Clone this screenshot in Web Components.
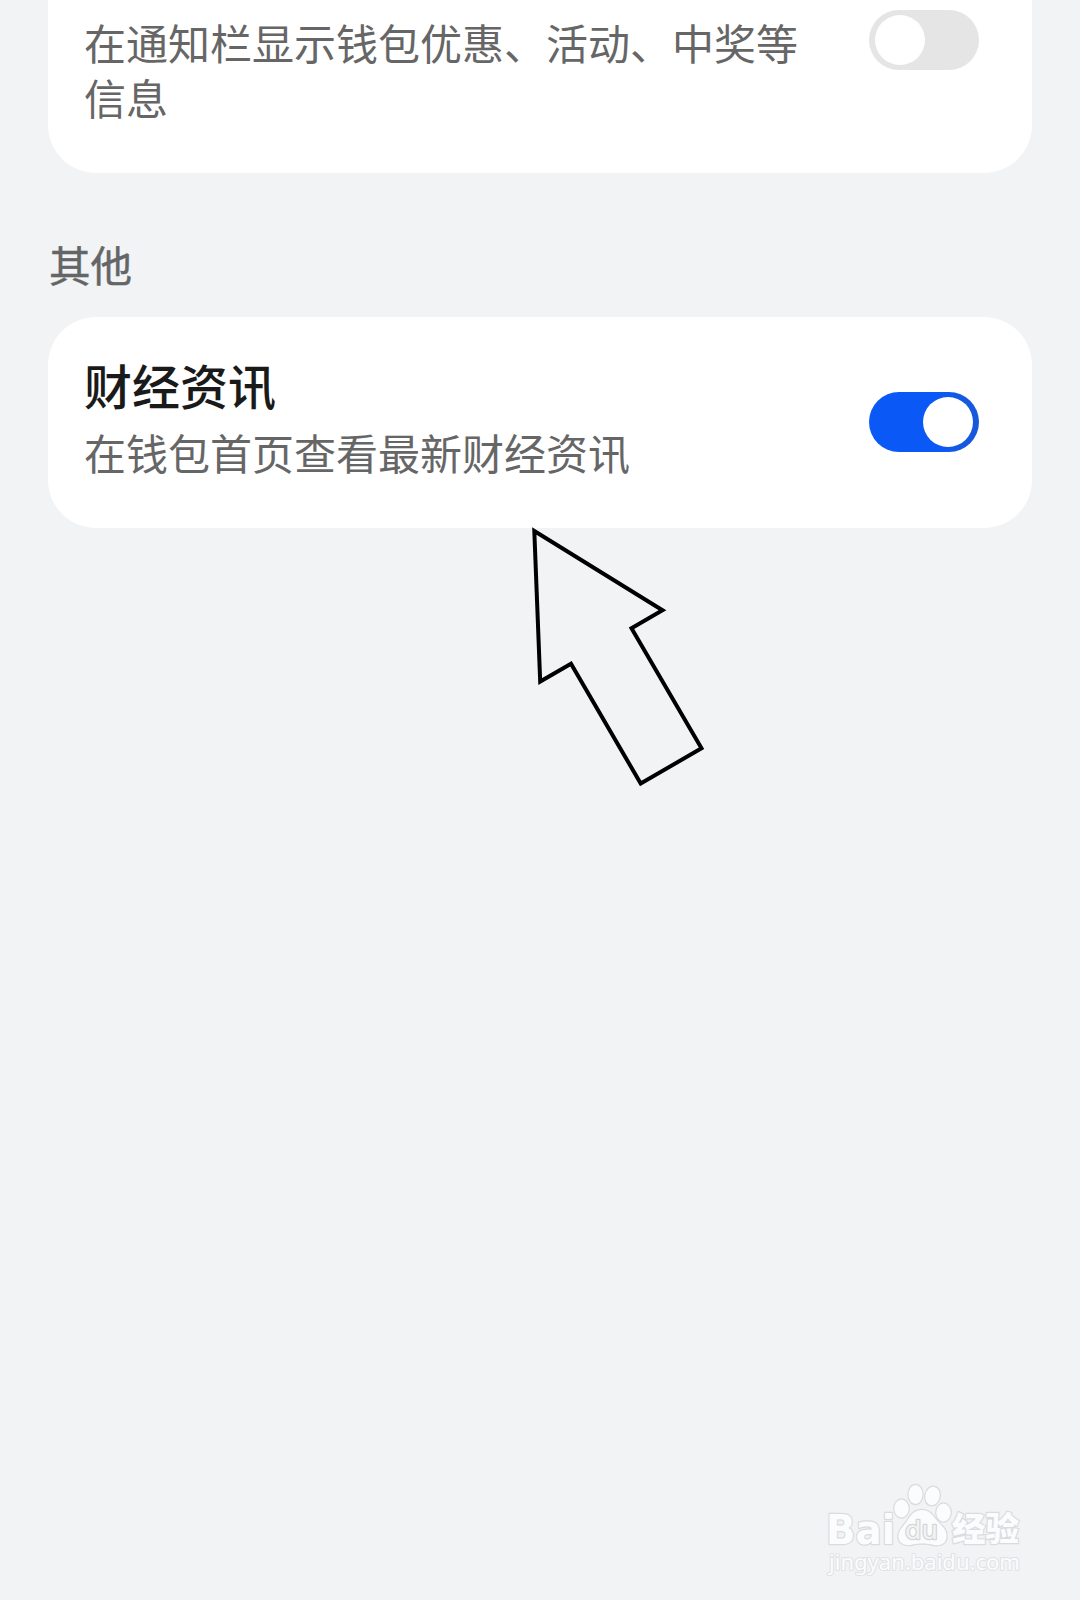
<!DOCTYPE html>
<html lang="zh-CN">
<head>
  <meta charset="UTF-8">
  <title>钱包设置</title>
  <style>
    body {
      margin: 0;
      background: #f1f3f5;
      font-family: "Noto Sans CJK SC", sans-serif;
    }
  </style>
</head>
<body>
  <settings-page>
    <setting-card class="first">
      <setting-row>在通知栏显示钱包优惠、活动、中奖等信息</setting-row>
    </setting-card>
    <section-title>其他</section-title>
    <setting-card>
      <setting-row checked>
        <span slot="title">财经资讯</span>
        在钱包首页查看最新财经资讯
      </setting-row>
    </setting-card>
    <pointer-arrow slot="overlay"></pointer-arrow>
    <site-watermark slot="overlay"></site-watermark>
  </settings-page>

  <script>
    class SettingsPage extends HTMLElement {
      constructor() {
        super();
        this.attachShadow({ mode: "open" }).innerHTML = `
          <style>
            :host {
              display: block;
              position: relative;
              height: 1600px;
              overflow: hidden;
            }
            main {
              display: flex;
              flex-direction: column;
              padding: 0 48px;
            }
            ::slotted(.first) {
              --card-height: 173px;
              --card-radius: 0 0 48px 48px;
              --card-align: flex-start;
              --card-bottom: 0;
            }
          </style>
          <main><slot></slot></main>
          <slot name="overlay"></slot>`;
      }
    }

    class SettingCard extends HTMLElement {
      constructor() {
        super();
        this.attachShadow({ mode: "open" }).innerHTML = `
          <style>
            :host {
              display: flex;
              align-items: var(--card-align, center);
              box-sizing: border-box;
              height: var(--card-height, 211px);
              padding: 0 53px var(--card-bottom, 1px) 36px;
              background: #fff;
              border-radius: var(--card-radius, 48px);
            }
          </style>
          <slot></slot>`;
      }
    }

    class SectionTitle extends HTMLElement {
      constructor() {
        super();
        this.attachShadow({ mode: "open" }).innerHTML = `
          <style>
            :host {
              display: block;
              box-sizing: border-box;
              height: 144px;
              padding: 64px 0 0 1px;
              font-size: 41.5px;
              line-height: 55px;
              color: #646566;
              -webkit-text-stroke: 0.5px #646566;
            }
          </style>
          <slot></slot>`;
      }
    }

    class SettingRow extends HTMLElement {
      constructor() {
        super();
        this.attachShadow({ mode: "open" });
      }

      connectedCallback() {
        const checked = this.hasAttribute("checked");
        this.shadowRoot.innerHTML = `
          <style>
            :host {
              display: flex;
              flex: 1;
              align-items: ${checked ? "center" : "flex-start"};
              justify-content: space-between;
            }
            .text {
              width: 735px;
              padding: ${checked ? "0 0 16px" : "14px 0 0"};
              font-size: 42px;
              line-height: 55px;
              color: #666;
            }
            ::slotted([slot="title"]) {
              display: block;
              margin-bottom: 5px;
              font-size: 48px;
              font-weight: 500;
              line-height: 70px;
              color: #1a1a1a;
            }
            toggle-switch {
              margin-top: ${checked ? "0" : "10px"};
            }
          </style>
          <div class="text"><slot name="title"></slot><slot></slot></div>
          <toggle-switch ${checked ? "checked" : ""}></toggle-switch>`;
      }
    }

    class ToggleSwitch extends HTMLElement {
      constructor() {
        super();
        this.attachShadow({ mode: "open" }).innerHTML = `
          <style>
            :host {
              display: flex;
              box-sizing: border-box;
              width: 110px;
              height: 60px;
              padding: 5px 6px;
              border-radius: 30px;
              background: #e5e5e5;
            }
            :host([checked]) {
              justify-content: flex-end;
              background: linear-gradient(90deg, #0a59f7 60%, #1759dc 90%);
            }
            .knob {
              width: 50px;
              height: 50px;
              border-radius: 50%;
              background: #fff;
            }
          </style>
          <div class="knob"></div>`;
      }
    }

    class PointerArrow extends HTMLElement {
      constructor() {
        super();
        this.attachShadow({ mode: "open" }).innerHTML = `
          <style>
            :host {
              display: block;
              position: absolute;
              left: 520px;
              top: 515px;
            }
            svg { display: block; }
          </style>
          <svg width="200" height="280" viewBox="520 515 200 280">
            <path d="M534.3 531 L662.5 610.3 L631.5 628.3 L701.5 748.3 L640.7 783.5 L571 663.8 L540.2 681.5 Z"
              fill="none" stroke="#000" stroke-width="4"/>
          </svg>`;
      }
    }

    class SiteWatermark extends HTMLElement {
      constructor() {
        super();
        this.attachShadow({ mode: "open" }).innerHTML = `
          <style>
            :host {
              display: block;
              position: absolute;
              left: 820px;
              top: 1475px;
            }
            svg { display: block; }
            text, .paw {
              fill: #fbfcfd;
              stroke: #d9dbdd;
              stroke-width: 2.4;
              paint-order: stroke;
              stroke-linejoin: round;
            }
            .latin { font-family: "DejaVu Sans", sans-serif; }
            .url {
              font-family: "Noto Sans", sans-serif;
              stroke: #e0e2e4;
              stroke-width: 2;
            }
          </style>
          <svg width="210" height="110" viewBox="820 1475 210 110">
            <text class="latin" x="826" y="1544" font-size="41" font-weight="700" textLength="69" lengthAdjust="spacingAndGlyphs">Bai</text>
            <g class="paw">
              <ellipse cx="901.5" cy="1508.5" rx="7.2" ry="9"/>
              <ellipse cx="915.5" cy="1494.5" rx="7" ry="9.5"/>
              <ellipse cx="932.5" cy="1496" rx="7.2" ry="9.3" transform="rotate(12 932.5 1496)"/>
              <ellipse cx="943.5" cy="1512.5" rx="7.2" ry="9"/>
              <path d="M922 1510 C930 1510 933 1516 938 1522 C943 1527 947 1530 946.500 1537 C946 1544 940 1546 934 1545 C927 1543 917 1543 911 1545 C903 1546 898 1542 898.500 1536 C899 1529 904 1526 907 1521 C911 1515 914 1510 922 1510 Z"/>
            </g>
            <text class="latin" x="905" y="1539" font-size="25" textLength="33" lengthAdjust="spacingAndGlyphs" style="fill:#f1f3f5;stroke:#d3d5d7">du</text>
            <text x="952" y="1541" font-size="33" font-weight="900" textLength="67" lengthAdjust="spacingAndGlyphs">经验</text>
            <text class="url" x="829" y="1570" font-size="21.5" textLength="191" lengthAdjust="spacingAndGlyphs">jingyan.baidu.com</text>
          </svg>`;
      }
    }

    customElements.define("toggle-switch", ToggleSwitch);
    customElements.define("setting-row", SettingRow);
    customElements.define("setting-card", SettingCard);
    customElements.define("section-title", SectionTitle);
    customElements.define("pointer-arrow", PointerArrow);
    customElements.define("site-watermark", SiteWatermark);
    customElements.define("settings-page", SettingsPage);
  </script>
</body>
</html>
